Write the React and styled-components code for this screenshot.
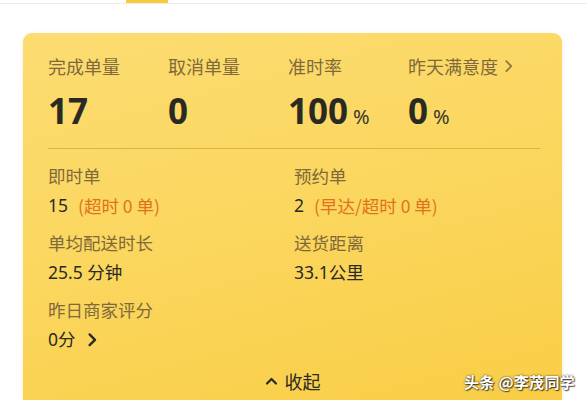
import styled, { createGlobalStyle } from "styled-components";

const GlobalStyle = createGlobalStyle`
  html, body {
    margin: 0;
    padding: 0;
    background: #ffffff;
    font-family: "Noto Sans CJK SC", "Noto Sans", sans-serif;
  }
`;

const summary = [
  { label: "完成单量", value: "17" },
  { label: "取消单量", value: "0" },
  { label: "准时率", value: "100", unit: "%" },
  { label: "昨天满意度", value: "0", unit: "%", link: true },
];

const details = [
  { label: "即时单", value: "15", note: "(超时 0 单)" },
  { label: "预约单", value: "2", note: "(早达/超时 0 单)" },
  { label: "单均配送时长", value: "25.5 分钟" },
  { label: "送货距离", value: "33.1公里" },
  { label: "昨日商家评分", value: "0分", arrow: true },
];

function Chevron({ color = "#8a7740", size = 12, weight = 1.6 }) {
  return (
    <svg width={size} height={size * 1.3} viewBox="0 0 10 13" fill="none">
      <path
        d="M3 2 L7.5 6.5 L3 11"
        stroke={color}
        strokeWidth={weight}
        strokeLinecap="round"
        strokeLinejoin="round"
      />
    </svg>
  );
}

function App() {
  return (
    <Page>
      <GlobalStyle />
      <TabBar>
        <TabMark />
      </TabBar>
      <Card>
        <SummaryGrid>
          {summary.map((s) => (
            <SummaryItem key={s.label}>
              <Label>
                {s.label}
                {s.link && (
                  <LinkArrow>
                    <Chevron size={11} />
                  </LinkArrow>
                )}
              </Label>
              <BigNumber>
                {s.value}
                {s.unit && <Unit>{s.unit}</Unit>}
              </BigNumber>
            </SummaryItem>
          ))}
        </SummaryGrid>
        <Divider />
        <DetailGrid>
          {details.map((d) => (
            <DetailItem key={d.label}>
              <DetailLabel>{d.label}</DetailLabel>
              <DetailValue>
                {d.value}
                {d.note && <Note>{d.note}</Note>}
                {d.arrow && (
                  <ValueArrow>
                    <Chevron color="#2b2923" size={12} weight={2} />
                  </ValueArrow>
                )}
              </DetailValue>
            </DetailItem>
          ))}
        </DetailGrid>
        <Collapse>
          <svg width="13" height="10" viewBox="0 0 13 10" fill="none">
            <path
              d="M2 7.5 L6.5 3 L11 7.5"
              stroke="#2b2923"
              strokeWidth="2.2"
              strokeLinecap="round"
              strokeLinejoin="round"
            />
          </svg>
          收起
        </Collapse>
      </Card>
      <Watermark>头条 @李茂同学</Watermark>
    </Page>
  );
}

export default App;

const Page = styled.div`
  position: relative;
  width: 587px;
  height: 400px;
  overflow: hidden;
  background: #ffffff;
`;

const TabBar = styled.div`
  height: 3px;
  border-bottom: 1px solid #ececec;
  display: flex;
`;

const TabMark = styled.div`
  margin-left: 126px;
  width: 42px;
  height: 3px;
  background: #f7cb3a;
`;

const Card = styled.div`
  margin: 29px 25px 0 23px;
  padding: 20px 0 0 25px;
  height: 400px;
  box-sizing: border-box;
  border-radius: 9px;
  background: linear-gradient(165deg, #fcdc72 0%, #fbd75f 45%, #f9cc42 100%);
  box-shadow: 0 1px 4px rgba(180, 150, 60, 0.18);
`;

const SummaryGrid = styled.div`
  display: grid;
  grid-template-columns: repeat(4, 120px);
`;

const SummaryItem = styled.div`
  display: flex;
  flex-direction: column;
`;

const Label = styled.div`
  display: flex;
  align-items: center;
  font-size: 18px;
  line-height: 26px;
  color: #80693a;
  white-space: nowrap;
`;

const LinkArrow = styled.span`
  display: inline-flex;
  margin-left: 5px;
`;

const BigNumber = styled.div`
  margin-top: 12px;
  font-family: "Noto Sans", "Open Sans", sans-serif;
  font-size: 35px;
  font-weight: 700;
  line-height: 40px;
  color: #2b2923;
  display: flex;
  align-items: baseline;
`;

const Unit = styled.span`
  margin-left: 5px;
  font-size: 20px;
  font-weight: 400;
  color: #3a372f;
`;

const Divider = styled.div`
  margin-top: 11px;
  margin-right: 22px;
  height: 1px;
  background: #dbb446;
`;

const DetailGrid = styled.div`
  display: grid;
  grid-template-columns: 246px 1fr;
  padding-top: 12px;
`;

const DetailItem = styled.div`
  display: flex;
  flex-direction: column;
  margin-bottom: 8px;
`;

const DetailLabel = styled.div`
  font-size: 17.5px;
  line-height: 30px;
  color: #80693a;
`;

const DetailValue = styled.div`
  display: flex;
  align-items: center;
  font-size: 17.5px;
  line-height: 29px;
  color: #2b2923;
  font-family: "Noto Sans", "Noto Sans CJK SC", sans-serif;
`;

const Note = styled.span`
  margin-left: 10px;
  color: #e0721c;
  font-family: "Noto Sans CJK SC", sans-serif;
`;

const ValueArrow = styled.span`
  display: inline-flex;
  margin-left: 10px;
`;

const Collapse = styled.div`
  margin: 4px 25px 0 0;
  display: flex;
  justify-content: center;
  align-items: center;
  gap: 7px;
  font-size: 18px;
  line-height: 30px;
  color: #2b2923;
`;

const Watermark = styled.div`
  position: absolute;
  right: 12px;
  bottom: 8px;
  font-size: 15px;
  font-weight: 700;
  color: #ffffff;
  text-shadow: 0 0 2px rgba(0, 0, 0, 0.8), 1px 1px 1px rgba(0, 0, 0, 0.6);
  letter-spacing: 0.3px;
`;
